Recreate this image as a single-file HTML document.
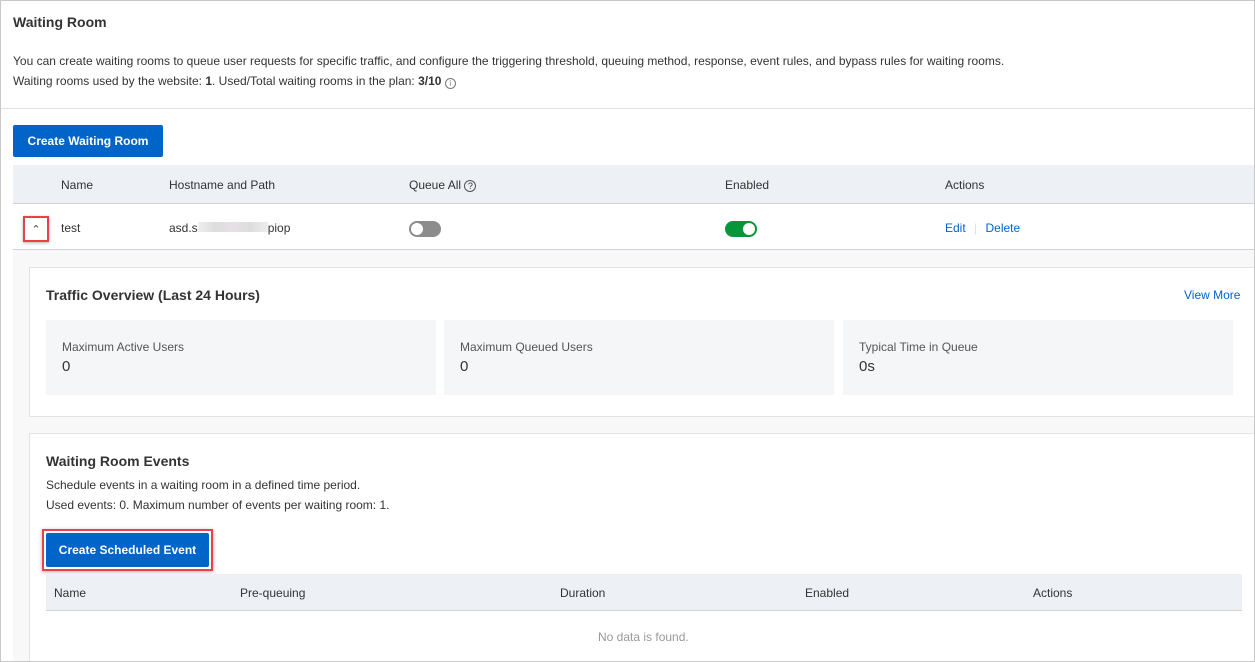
<!DOCTYPE html>
<html><head><meta charset="utf-8"><style>
*{box-sizing:border-box;margin:0;padding:0}
html,body{width:1255px;height:662px;overflow:hidden;background:#fff}
body{font-family:"Liberation Sans",sans-serif;color:#333;font-size:12px;position:relative}
.frame{position:absolute;left:0;top:0;width:1255px;height:662px;border:1px solid #c8c8c8;pointer-events:none;z-index:5}
.a{position:absolute;white-space:nowrap}
.btn{position:absolute;background:#0064c8;color:#fff;font-weight:bold;font-size:12px;display:flex;align-items:center;justify-content:center;border-radius:2px}
.th{position:absolute;background:#edf0f5;border-bottom:1px solid #cfd3d9}
.lnk{color:#0064c8}
.sw{position:absolute;width:32px;height:16px;border-radius:8px}
.sw i{position:absolute;top:2px;width:12px;height:12px;border-radius:50%;background:#fff}
.stat{position:absolute;top:320px;height:75px;background:#f5f6f8}
.stat .l{position:absolute;left:16px;top:20px;font-size:12px;color:#555}
.stat .v{position:absolute;left:16px;top:38px;font-size:15px;color:#333}
</style></head><body>
<div class="frame"></div>
<div class="a" style="left:13px;top:14px;font-size:14px;font-weight:bold;color:#333">Waiting Room</div>
<div class="a" style="left:13px;top:54px;color:#333">You can create waiting rooms to queue user requests for specific traffic, and configure the triggering threshold, queuing method, response, event rules, and bypass rules for waiting rooms.</div>
<div class="a" style="left:13px;top:74px;color:#333">Waiting rooms used by the website: <b>1</b>. Used/Total waiting rooms in the plan: <b>3/10</b> <span style="display:inline-block;width:11px;height:11px;border:1px solid #777;border-radius:50%;font-size:8px;line-height:9px;text-align:center;color:#777;vertical-align:-1px">i</span></div>
<div class="a" style="left:0;top:108px;width:1255px;height:1px;background:#e0e0e0"></div>
<div class="btn" style="left:13px;top:125px;width:150px;height:32px">Create Waiting Room</div>

<div class="th" style="left:13px;top:165px;width:1242px;height:39px"></div>
<div class="a" style="left:61px;top:178px">Name</div>
<div class="a" style="left:169px;top:178px">Hostname and Path</div>
<div class="a" style="left:409px;top:178px">Queue All <span style="display:inline-block;width:12px;height:12px;border:1px solid #555;border-radius:50%;font-size:9px;line-height:10px;text-align:center">?</span></div>
<div class="a" style="left:725px;top:178px">Enabled</div>
<div class="a" style="left:945px;top:178px">Actions</div>

<div class="a" style="left:23px;top:216px;width:26px;height:26px;border:2px solid #e8414a;box-shadow:0 1px 3px rgba(0,0,0,.3);text-align:center;font-size:11px;line-height:24px;color:#444">&#8963;</div>
<div class="a" style="left:61px;top:221px">test</div>
<div class="a" style="left:169px;top:221px">asd.s<span style="display:inline-block;width:70px;height:10px;background:linear-gradient(90deg,#eee,#ddd,#e6e0e6,#ddd,#eee)"></span>piop</div>
<div class="sw" style="left:409px;top:221px;background:#8c8c8c"><i style="left:2px"></i></div>
<div class="sw" style="left:725px;top:221px;background:#06963a"><i style="right:2px"></i></div>
<div class="a lnk" style="left:945px;top:221px">Edit <span style="color:#ddd;margin:0 5px">|</span> Delete</div>
<div class="a" style="left:13px;top:249px;width:1242px;height:1px;background:#cfd3d9"></div>

<div class="a" style="left:13px;top:250px;width:1242px;height:412px;background:#f8f8f8"></div>
<div class="a" style="left:29px;top:267px;width:1240px;height:150px;background:#fff;border:1px solid #e3e3e3"></div>
<div class="a" style="left:46px;top:287px;font-size:14px;font-weight:bold;color:#333">Traffic Overview (Last 24 Hours)</div>
<div class="a lnk" style="left:1184px;top:288px">View More</div>
<div class="stat" style="left:46px;width:390px"><div class="l">Maximum Active Users</div><div class="v">0</div></div>
<div class="stat" style="left:444px;width:390px"><div class="l">Maximum Queued Users</div><div class="v">0</div></div>
<div class="stat" style="left:843px;width:390px"><div class="l">Typical Time in Queue</div><div class="v">0s</div></div>

<div class="a" style="left:29px;top:433px;width:1240px;height:240px;background:#fff;border:1px solid #e3e3e3"></div>
<div class="a" style="left:46px;top:453px;font-size:14px;font-weight:bold;color:#333">Waiting Room Events</div>
<div class="a" style="left:46px;top:478px">Schedule events in a waiting room in a defined time period.</div>
<div class="a" style="left:46px;top:498px">Used events: 0. Maximum number of events per waiting room: 1.</div>
<div class="a" style="left:42px;top:529px;width:171px;height:42px;border:2px solid #e8414a;box-shadow:0 1px 4px rgba(0,0,0,.3)"></div>
<div class="btn" style="left:46px;top:533px;width:163px;height:34px">Create Scheduled Event</div>
<div class="th" style="left:46px;top:574px;width:1196px;height:37px"></div>
<div class="a" style="left:54px;top:586px">Name</div>
<div class="a" style="left:240px;top:586px">Pre-queuing</div>
<div class="a" style="left:560px;top:586px">Duration</div>
<div class="a" style="left:805px;top:586px">Enabled</div>
<div class="a" style="left:1033px;top:586px">Actions</div>
<div class="a" style="left:598px;top:630px;color:#999">No data is found.</div>
</body></html>
